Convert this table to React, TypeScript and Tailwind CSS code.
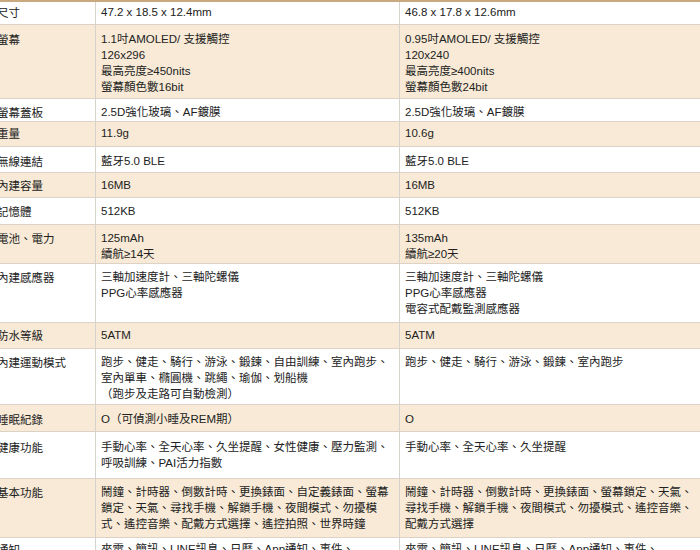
import React from "react";

type Row = { label: string; a: string[]; b: string[]; h: number; pt: number };

const rows: Row[] = [
  { label: "尺寸", a: ["47.2 x 18.5 x 12.4mm"], b: ["46.8 x 17.8 x 12.6mm"], h: 23, pt: 2 },
  {
    label: "螢幕",
    a: ["1.1吋AMOLED/ 支援觸控", "126x296", "最高亮度≥450nits", "螢幕顏色數16bit"],
    b: ["0.95吋AMOLED/ 支援觸控", "120x240", "最高亮度≥400nits", "螢幕顏色數24bit"],
    h: 74,
    pt: 6,
  },
  { label: "螢幕蓋板", a: ["2.5D強化玻璃、AF鍍膜"], b: ["2.5D強化玻璃、AF鍍膜"], h: 23, pt: 5 },
  { label: "重量", a: ["11.9g"], b: ["10.6g"], h: 25, pt: 3 },
  { label: "無線連結", a: ["藍牙5.0 BLE"], b: ["藍牙5.0 BLE"], h: 26, pt: 6 },
  { label: "內建容量", a: ["16MB"], b: ["16MB"], h: 25, pt: 4 },
  { label: "記憶體", a: ["512KB"], b: ["512KB"], h: 27, pt: 5 },
  { label: "電池、電力", a: ["125mAh", "續航≥14天"], b: ["135mAh", "續航≥20天"], h: 39, pt: 5 },
  {
    label: "內建感應器",
    a: ["三軸加速度計、三軸陀螺儀", "PPG心率感應器"],
    b: ["三軸加速度計、三軸陀螺儀", "PPG心率感應器", "電容式配戴監測感應器"],
    h: 59,
    pt: 5,
  },
  { label: "防水等級", a: ["5ATM"], b: ["5ATM"], h: 26, pt: 4 },
  {
    label: "內建運動模式",
    a: ["跑步、健走、騎行、游泳、鍛鍊、自由訓練、室內跑步、", "室內單車、橢圓機、跳繩、瑜伽、划船機", "（跑步及走路可自動檢測）"],
    b: ["跑步、健走、騎行、游泳、鍛鍊、室內跑步"],
    h: 56,
    pt: 5,
  },
  { label: "睡眠紀錄", a: ["O（可偵測小睡及REM期）"], b: ["O"], h: 27, pt: 6 },
  {
    label: "健康功能",
    a: ["手動心率、全天心率、久坐提醒、女性健康、壓力監測、", "呼吸訓練、PAI活力指數"],
    b: ["手動心率、全天心率、久坐提醒"],
    h: 47,
    pt: 7,
  },
  {
    label: "基本功能",
    a: [
      "鬧鐘、計時器、倒數計時、更換錶面、自定義錶面、螢幕",
      "鎖定、天氣、尋找手機、解鎖手機、夜間模式、勿擾模",
      "式、遙控音樂、配戴方式選擇、遙控拍照、世界時鐘",
    ],
    b: [
      "鬧鐘、計時器、倒數計時、更換錶面、螢幕鎖定、天氣、",
      "尋找手機、解鎖手機、夜間模式、勿擾模式、遙控音樂、",
      "配戴方式選擇",
    ],
    h: 59,
    pt: 5,
  },
  {
    label: "通知",
    a: ["來電、簡訊、LINE訊息、日曆、App通知、事件、", "鬧鐘"],
    b: ["來電、簡訊、LINE訊息、日曆、App通知、事件、", "鬧鐘"],
    h: 59,
    pt: 3,
  },
];

function Cell({ lines, pt, className }: { lines: string[]; pt: number; className?: string }) {
  return (
    <div className={"whitespace-nowrap overflow-hidden " + (className ?? "")} style={{ paddingTop: pt }}>
      {lines.map((l, i) => (
        <div key={i} className="h-[16px] leading-[16px]">
          {l}
        </div>
      ))}
    </div>
  );
}

export default function App() {
  return (
    <div
      className="w-[700px] h-[550px] overflow-hidden bg-white text-[#222222] text-[11.5px]"
      style={{ fontFamily: '"Liberation Sans", "Noto Sans CJK TC", sans-serif' }}
    >
      <div className="ml-[-10px] w-[720px] border-t-[2px] border-[#c9a980]">
        {rows.map((r, i) => (
          <div
            key={i}
            className={
              "grid grid-cols-[105px_304px_311px] border-b border-[#dcd3c6] " +
              (i % 2 === 1 ? "bg-[#f8ead6]" : "bg-white")
            }
            style={{ height: r.h }}
          >
            <Cell lines={[r.label]} pt={r.pt + 1} className="pl-[7px]" />
            <Cell lines={r.a} pt={r.pt} className="pl-[5px] border-l border-[#d6d2cc]" />
            <Cell lines={r.b} pt={r.pt} className="pl-[5px] border-l border-[#d6d2cc]" />
          </div>
        ))}
      </div>
    </div>
  );
}
